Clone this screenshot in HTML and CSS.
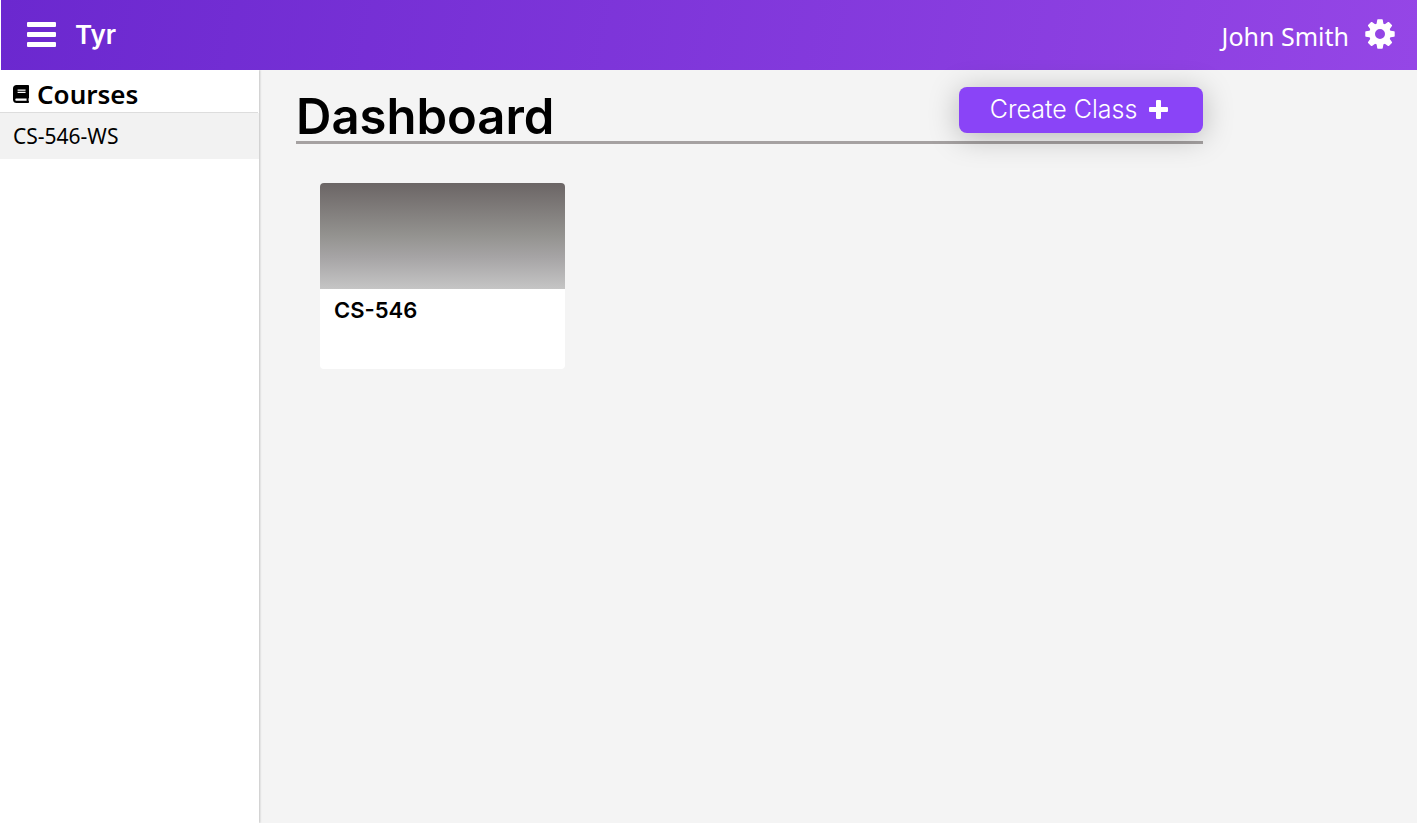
FILE: index.html
```html
<!DOCTYPE html>
<html lang="en">
<head>
<meta charset="utf-8">
<meta name="viewport" content="width=device-width, initial-scale=1">
<title>Tyr</title>
<link rel="stylesheet" href="styles.css">
</head>
<body>
<header class="topbar">
  <button class="icon-button" type="button" aria-label="Toggle menu">
    <svg class="icon-bars" viewBox="0 0 29 25" aria-hidden="true"><rect width="29" height="5" rx="1"/><rect y="10" width="29" height="5" rx="1"/><rect y="20" width="29" height="5" rx="1"/></svg>
  </button>
  <a class="brand" href="#">Tyr</a>
  <span class="user">John Smith</span>
  <button class="icon-button" type="button" aria-label="Settings">
    <svg class="icon-gear" viewBox="-15 -15 30 30" aria-hidden="true">
      <defs><path id="teeth" d="M-3.600-9-2.800-14.100Q-2.700-14.700-2.100-14.700H2.100Q2.700-14.700 2.800-14.100L3.600-9ZM-3.600 9-2.800 14.100Q-2.700 14.700-2.100 14.700H2.100Q2.700 14.700 2.800 14.100L3.600 9Z"/></defs>
      <path fill-rule="evenodd" d="M0-10.800A10.800 10.800 0 1 1 0 10.800 10.800 10.800 0 1 1 0-10.800ZM0-5A5 5 0 1 0 0 5 5 5 0 1 0 0-5Z"/>
      <use href="#teeth"/>
      <use href="#teeth" transform="rotate(45)"/>
      <use href="#teeth" transform="rotate(90)"/>
      <use href="#teeth" transform="rotate(135)"/>
    </svg>
  </button>
</header>
<div class="layout">
  <nav class="sidebar" aria-label="Courses">
    <h2 class="sidebar-title">
      <svg class="icon-book" viewBox="0 0 448 512" preserveAspectRatio="none" aria-hidden="true"><path d="M448 360V24c0-13.300-10.700-24-24-24H96C43 0 0 43 0 96v320c0 53 43 96 96 96h328c13.300 0 24-10.700 24-24v-16c0-7.500-3.500-14.300-8.900-18.700-4.200-15.400-4.200-59.300 0-74.700 5.400-4.300 8.900-11.100 8.900-18.600zM128 134c0-3.300 2.700-6 6-6h212c3.300 0 6 2.700 6 6v20c0 3.300-2.700 6-6 6H134c-3.300 0-6-2.700-6-6v-20zm0 64c0-3.300 2.700-6 6-6h212c3.300 0 6 2.700 6 6v20c0 3.300-2.700 6-6 6H134c-3.300 0-6-2.700-6-6v-20zm253.400 250H96c-17.700 0-32-14.300-32-32 0-17.600 14.400-32 32-32h285.400c-1.900 17.100-1.900 46.900 0 64z"/></svg>
      Courses
    </h2>
    <a class="course-link" href="#">CS-546-WS</a>
  </nav>
  <main class="content">
    <div class="page-head">
      <h1 class="page-title">Dashboard</h1>
      <button class="create" type="button">Create Class
        <svg class="icon-plus" viewBox="0 0 19 19" aria-hidden="true"><path d="M8 0h3a1 1 0 0 1 1 1v6h6a1 1 0 0 1 1 1v3a1 1 0 0 1-1 1h-6v6a1 1 0 0 1-1 1H8a1 1 0 0 1-1-1v-6H1a1 1 0 0 1-1-1V8a1 1 0 0 1 1-1h6V1a1 1 0 0 1 1-1Z"/></svg>
      </button>
    </div>
    <section class="cards" aria-label="Classes">
      <a class="card" href="#">
        <span class="card-banner"></span>
        <span class="card-name">CS-546</span>
      </a>
    </section>
  </main>
</div>
</body>
</html>
```

FILE: styles.css
```css
* { box-sizing: border-box; }

body {
  display: flex;
  flex-direction: column;
  min-height: 100vh;
  margin: 0;
  padding-bottom: 2px;
  background: #fff;
  color: #000;
  font-family: "Noto Sans", sans-serif;
}

svg { display: block; fill: currentColor; }
a { color: inherit; text-decoration: none; }
button { border: 0; font: inherit; cursor: pointer; }

.topbar {
  display: flex;
  align-items: center;
  height: 70px;
  margin-left: 1px;
  padding: 0 22px 2px 26px;
  background: linear-gradient(100deg, #6b28cf, #9546e6);
  color: #fff;
}

.icon-button { padding: 0; background: none; color: inherit; }
.icon-bars { width: 29px; height: 25px; }
.icon-gear { width: 30px; height: 30px; }

.brand {
  margin-left: 19px;
  font-family: Inter, sans-serif;
  font-size: 26px;
  font-weight: 600;
}

.user {
  margin: 4px 16px 0 auto;
  font-size: 25px;
}

.layout { display: flex; flex: 1; }

.sidebar {
  z-index: 1;
  flex: 0 0 259px;
  background: #fff;
  box-shadow: 1px 0 2px rgba(0, 0, 0, 0.2);
  clip-path: inset(0 -4px 0 0);
}

.sidebar-title {
  display: flex;
  align-items: center;
  gap: 8px;
  height: 43px;
  margin: 0 1px 0 0;
  padding: 6px 13px 0;
  border-bottom: 1px solid #ddd;
  font-size: 26px;
  font-weight: 600;
}

.icon-book { width: 16px; height: 18px; }

.course-link {
  display: flex;
  align-items: center;
  height: 46px;
  padding: 0 13px;
  background: #f2f2f2;
  font-size: 21px;
}

.content {
  flex: 1;
  padding: 17px 214px 24px 37px;
  background: #f4f4f4;
}

.page-head {
  display: flex;
  justify-content: space-between;
  align-items: flex-start;
  height: 57px;
  border-bottom: 3px solid #a5a1a1;
}

.page-title {
  margin: 0;
  font-family: Inter, sans-serif;
  font-size: 49px;
  font-weight: 600;
  line-height: 60px;
}

.create {
  display: flex;
  align-items: center;
  justify-content: center;
  gap: 12px;
  width: 244px;
  height: 46px;
  padding: 0 4px 2px 0;
  border-radius: 8px;
  background: #8a44f7;
  box-shadow: 0 4px 30px rgba(0, 0, 0, 0.25);
  color: #fff;
  font-family: Inter, sans-serif;
  font-size: 25px;
  font-weight: 300;
}

.icon-plus { width: 19px; height: 19px; }

.cards {
  display: flex;
  flex-wrap: wrap;
  gap: 24px;
  padding: 39px 24px;
}

.card {
  display: flex;
  flex-direction: column;
  width: 245px;
  height: 186px;
  border-radius: 4px;
  overflow: hidden;
  background: #fff;
}

.card-banner {
  height: 106px;
  background: linear-gradient(#6b6565, #949390 50%, #a6a4a5 70%, #c5c5c5);
}

.card-name {
  padding: 6px 14px;
  font-family: Inter, sans-serif;
  font-size: 22px;
  font-weight: 600;
  line-height: 30px;
}
```
